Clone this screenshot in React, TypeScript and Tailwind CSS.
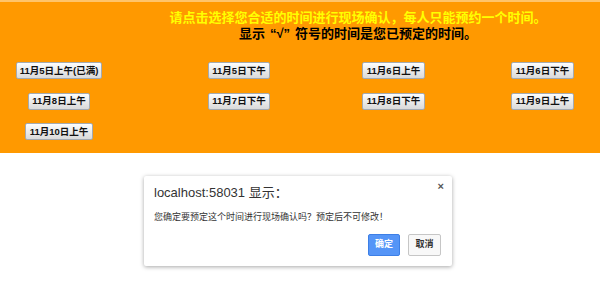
import React from 'react';

interface Slot {
  label: string;
  w: string;
  place: string;
}

// 4 columns like the original table, buttons centred in their cells
const slots: Slot[] = [
  { label: '11月5日上午(已满)', w: 'w-[86px]', place: 'justify-self-center' },
  { label: '11月5日下午', w: 'w-[62px]', place: 'justify-self-center' },
  { label: '11月6日上午', w: 'w-[63px]', place: 'justify-self-center' },
  { label: '11月6日下午', w: 'w-[63px]', place: 'justify-self-end mr-[26px]' },
  { label: '11月8日上午', w: 'w-[62px]', place: 'justify-self-center' },
  { label: '11月7日下午', w: 'w-[62px]', place: 'justify-self-center' },
  { label: '11月8日下午', w: 'w-[63px]', place: 'justify-self-center' },
  { label: '11月9日上午', w: 'w-[63px]', place: 'justify-self-end mr-[26px]' },
  { label: '11月10日上午', w: 'w-[68px]', place: 'justify-self-center' },
];

const App: React.FC = () => {
  return (
    <div className="w-[600px] h-[288px] bg-white font-['Liberation_Sans','Noto_Sans_CJK_SC',sans-serif]">
      <div className="bg-[#ff9900] border-t-2 border-[#ffc46a] pt-[8px] pb-[13px]">
        <div className="pl-[116px] text-center text-[13px] font-bold leading-[16px]">
          <p className="text-[#ffff00]">请点击选择您合适的时间进行现场确认，每人只能预约一个时间。</p>
          <p className="text-black">
            显示<span className="px-[5px]">“√”</span>符号的时间是您已预定的时间。
          </p>
        </div>

        <div className="mt-[20px] grid grid-cols-[118px_242px_67px_1fr] gap-y-[13.5px]">
          {slots.map((s, i) => (
            <button
              key={i}
              className={`${s.w} ${s.place} h-[17px] flex items-center justify-center rounded-[2px] border border-[#a3aab2] bg-gradient-to-b from-[#fdfdfd] to-[#dadada] text-[9.5px] font-semibold text-[#111] leading-none whitespace-nowrap`}
            >
              {s.label}
            </button>
          ))}
        </div>
      </div>

      <div className="mt-[23px] ml-[144px] w-[308px] h-[90px] bg-white rounded-[2px] shadow-[0_1px_4px_rgba(0,0,0,0.35)] relative pt-[9px] pl-[10px] pr-[11px]">
        <span className="absolute right-[8px] top-[5px] text-[11px] font-bold text-[#555] leading-none">×</span>
        <p className="text-[13px] leading-[16px] text-[#333]">localhost:58031 显示：</p>
        <p className="mt-[10px] text-[9px] leading-[12px] text-[#333]">您确定要预定这个时间进行现场确认吗？预定后不可修改！</p>
        <div className="mt-[11px] flex justify-end gap-[8px]">
          <button className="w-[32px] h-[22px] rounded-[2px] bg-[#5595f7] border border-[#3d7fe6] text-white text-[9px] font-semibold">确定</button>
          <button className="w-[33px] h-[22px] rounded-[2px] bg-[#f8f8f8] border border-[#c6c6c6] text-[#333] text-[9px] font-semibold">取消</button>
        </div>
      </div>
    </div>
  );
};

export default App;
